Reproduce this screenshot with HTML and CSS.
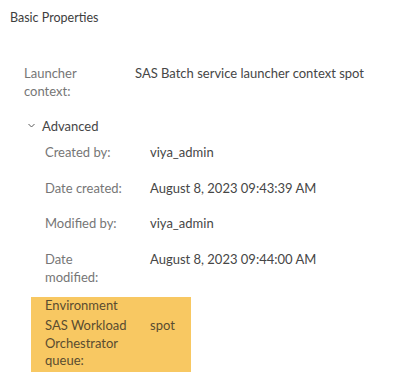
FILE: index.html
```html
<!DOCTYPE html>
<html>
<head>
<meta charset="utf-8">
<link rel="stylesheet" href="styles.css">
</head>
<body>
<div class="panel">
  <div class="title">Basic Properties</div>
  <div class="row launcher">
    <div class="label">Launcher context:</div>
    <div class="value">SAS Batch service launcher context spot</div>
  </div>
  <div class="advanced-head">
    <svg class="chev" width="7" height="5" viewBox="0 0 7 5"><path d="M0.5 1 L3.5 4 L6.5 1" fill="none" stroke="#5a5a5a" stroke-width="1"/></svg>
    <span>Advanced</span>
  </div>
  <div class="adv">
    <div class="row"><div class="label">Created by:</div><div class="value">viya_admin</div></div>
    <div class="row"><div class="label">Date created:</div><div class="value">August 8, 2023 09:43:39 AM</div></div>
    <div class="row"><div class="label">Modified by:</div><div class="value">viya_admin</div></div>
    <div class="row"><div class="label">Date modified:</div><div class="value">August 8, 2023 09:44:00 AM</div></div>
  </div>
  <div class="env">
    <div class="env-title">Environment</div>
    <div class="row"><div class="label">SAS Workload Orchestrator queue:</div><div class="value">spot</div></div>
  </div>
</div>
</body>
</html>
```
FILE: styles.css
```css
html, body {
  margin: 0;
  padding: 0;
  background: #ffffff;
}
body {
  font-family: Lato, "Open Sans", sans-serif;
  font-size: 13px;
  line-height: 18px;
  color: #464646;
  width: 400px;
  height: 372px;
  overflow: hidden;
}
.panel {
  display: flex;
  flex-direction: column;
}
.title {
  padding: 9px 0 0 10px;
  font-size: 12.5px;
  color: #3e3e3e;
}
.row {
  display: grid;
  grid-template-columns: 83px 1fr;
  column-gap: 22px;
}
.label {
  color: #767676;
}
.value {
  color: #464646;
}
.launcher {
  margin-top: 37px;
  padding-left: 24px;
  grid-template-columns: 91px 1fr;
  column-gap: 20px;
}
.advanced-head {
  margin-top: 17px;
  padding-left: 28px;
  display: flex;
  align-items: center;
  gap: 7px;
}
.chev {
  display: block;
  margin-top: -1px;
}
.adv {
  margin-top: 8px;
  padding-left: 45px;
  display: flex;
  flex-direction: column;
  gap: 17.5px;
}
.env {
  margin: 11px 0 0 31px;
  width: 160px;
  min-height: 90px;
  padding: 0 0 0 14px;
  box-sizing: border-box;
  background: #f8c862;
  display: flex;
  flex-direction: column;
  gap: 3px;
  line-height: 17.5px;
}
.env .label, .env .value, .env-title {
  color: #5a4c30;
}
.env .row {
  grid-template-columns: 83px 1fr;
}
```
